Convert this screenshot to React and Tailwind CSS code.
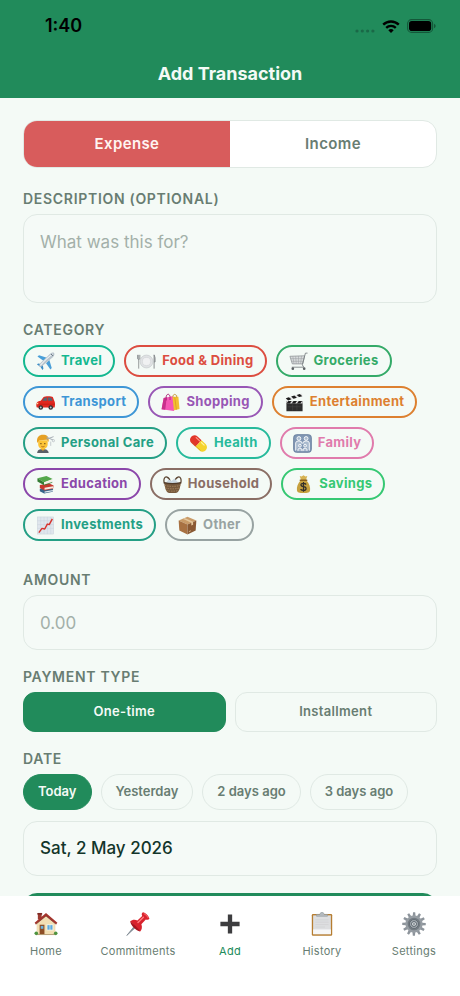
import React, { useState } from 'react';

const PlaneIcon = () => (
    <>
        <path d="M1.5 4.800 3.200 3.400l8.300 2.600-3.300 3.400z" fill="#4a9fd8" />
        <path d="M15.200 18.500l1.400-1.700-2.600-8.300-3.400 3.300z" fill="#4a9fd8" />
        <path d="M1 13.200l1.200-1 4.300.6.6.6.7 4.300-1 1.200-2.200-3.500z" fill="#3c8dc6" />
        <path d="M19 1c-1-1-3.200-.2-4.700 1.300L4.700 11.600c-.9 1-1.700 2.500-1.200 3.900 1.300.4 2.800-.4 3.800-1.300l10.400-8.700c1.400-1.300 2.300-3.500 1.300-4.500z" fill="#b9c4cc" />
        <path d="M17.700 2C13 5.200 8 10.200 4.500 14.100" stroke="#eef3f6" strokeWidth="1.100" fill="none" />
        <path d="M16 2.200l1.800 1.800" stroke="#4b5c68" strokeWidth="1" />
    </>
);

const PlateIcon = () => (
    <>
        <circle cx="10" cy="10" r="6.800" fill="#e0e2e4" stroke="#c0c4c7" strokeWidth=".6" />
        <circle cx="10" cy="10" r="4.300" fill="#f0f1f2" stroke="#cfd2d4" strokeWidth=".6" />
        <path d="M.6 3v4.200q1.200 1.500 2.400 0V3M1.800 3v14.500" stroke="#85898c" strokeWidth=".9" fill="none" />
        <path d="M18 17.500V3q1.400 2 1 7.500h-1" stroke="#85898c" strokeWidth="1" fill="#b5b9bc" />
    </>
);

const CartIcon = () => (
    <>
        <path d="M1 4.500l15.500-.5-2 8.500H3.500z" fill="#d9dcdd" stroke="#8c9194" strokeWidth=".8" />
        <path d="M4 4.500l1.200 7.800M7 4.400l.6 8M10 4.200l-.1 8.200M13.200 4.100l-1 8.400M1.600 7h14M2.500 9.800h12.600" stroke="#9ba0a3" strokeWidth=".6" />
        <path d="M19.500 1.200h-2.200L14 13.500l1.500 2.500H3" stroke="#777c80" strokeWidth=".9" fill="none" />
        <circle cx="4" cy="17.500" r="1.400" fill="#5c6164" />
        <circle cx="16" cy="17.500" r="1.400" fill="#5c6164" />
    </>
);

const CarIcon = () => (
    <>
        <path d="M.6 10.800c.4-1.700 2.400-2.300 4.400-2.700l3-3.900c1-1.100 8.300-1.300 9.700 0l1.600 4.300c.9 1.100.9 4.500.3 6.700H.9c-.7-1.100-.7-3-.3-4.400z" fill="#e0281f" />
        <path d="M6.500 8.100l2.200-2.900c.8-.4 1.800-.5 2.800-.5v3.400zM12.500 4.700c1.500 0 3 .1 3.900.5l1.100 2.900h-5z" fill="#59636f" />
        <path d="M.8 11.800h18.700" stroke="#b5160f" strokeWidth=".6" />
        <circle cx="5" cy="15.200" r="2.400" fill="#2e3033" />
        <circle cx="5" cy="15.200" r="1" fill="#bfc3c6" />
        <circle cx="15.500" cy="15.200" r="2.400" fill="#2e3033" />
        <circle cx="15.500" cy="15.200" r="1" fill="#bfc3c6" />
        <path d="M.7 10.700l1.700-.6v1.700H.6z" fill="#ffd9a0" />
    </>
);

const BagsIcon = () => (
    <>
        <path d="M11 4h7.300l1.200 12.800-6.500 1.700z" fill="#f3c033" />
        <path d="M12.500 4.500V2.700q2-2.700 4 0v1.800" stroke="#b98416" strokeWidth=".8" fill="none" />
        <path d="M14.500 4.500l1.700 13" stroke="#d99b1d" strokeWidth=".8" />
        <path d="M2.800 5.200l9.200-1.700 1.700 15.500L.6 17.200z" fill="#f557b5" />
        <path d="M2.800 5.200L.6 17.200l3.900.5L6 4.600z" fill="#c8308c" />
        <path d="M5.500 7.800V3.200q2-4 4 0v4.200" stroke="#a72673" strokeWidth=".9" fill="none" />
    </>
);

const ClapperIcon = () => (
    <>
        <path d="M1.500 8.500h17v10.700h-17z" fill="#2d2d2d" />
        <path d="M1.500 8.500h17v2.500h-17z" fill="#e4e4e4" />
        <path d="M1.500 11l2-2.500h3.600l-2 2.500zM7 11l2-2.500h3.600l-2 2.500zM12.500 11l2-2.500h3.600l-2 2.500z" fill="#1d1d1d" />
        <path d="M.8 5.400L17.700.4l.8 2.900L1.700 8.200z" fill="#e4e4e4" />
        <path d="M.8 5.400l3.300-1 2.700 2.300-3.500 1.100zM6.500 3.700l3.400-1 2.600 2.300-3.500 1zM12.300 2l3.300-1 2.600 2.300-3.400 1z" fill="#1d1d1d" />
        <path d="M3 14.500h14M8 12v6.500M12.500 12v6.500" stroke="#4a4a4a" strokeWidth=".5" />
    </>
);

const HaircutIcon = () => (
    <>
        <path d="M1.200 20c.3-3.500 2.800-4.300 6-4.300s5.700 1 6.200 4.300z" fill="#5b6068" />
        <path d="M5.300 13h4v3.300l-2 1.200-2-1.200z" fill="#eaa92b" />
        <path d="M2.300 6.500h10v4.300c0 3-2.200 5-5 5s-5-2-5-5z" fill="#fcc436" />
        <path d="M1.300 9.500C.1 3.300 3.500.9 7.300.9s7 1.900 5.900 7.600L11.500 6l-8 .5z" fill="#e6a123" />
        <path d="M5.200 9.600v1.100M9.300 9.600v1.100" stroke="#5c3b12" strokeWidth="1.100" />
        <path d="M5.600 13q1.700 1.300 3.400 0" stroke="#a35c16" strokeWidth=".8" fill="none" />
        <path d="M11 3.300l7 3M11 5.500l7.500-2.700" stroke="#a3abb2" strokeWidth="1" />
        <circle cx="18.300" cy="7" r="1.200" fill="none" stroke="#b7bdc3" strokeWidth=".8" />
        <path d="M15.500 8v4.500" stroke="#c5cacd" strokeWidth="1" />
    </>
);

const PillIcon = () => (
    <g transform="rotate(43 10 10)">
        <path d="M10 5.300H4.200a4.700 4.700 0 0 0 0 9.400H10z" fill="#e23629" />
        <path d="M10 5.300h5.800a4.700 4.700 0 0 1 0 9.400H10z" fill="#f5d32c" />
        <path d="M4 7.200h5" stroke="#ff9b86" strokeWidth="1.200" strokeLinecap="round" />
        <path d="M11.500 7.200h4" stroke="#fff4a0" strokeWidth="1.200" strokeLinecap="round" />
        <path d="M3.500 13.900h13" stroke="#b67919" strokeWidth=".7" opacity=".5" />
    </g>
);

const FamilyIcon = () => (
    <>
        <rect x=".7" y=".7" width="18.600" height="18.600" rx="3" fill="#8298b5" stroke="#62799a" strokeWidth=".9" />
        <g fill="#a9bace" stroke="#fff" strokeWidth=".9">
            <circle cx="6.200" cy="4.700" r="2" />
            <circle cx="13.800" cy="4.700" r="2" />
            <path d="M2.800 17.500V9.500q0-2.200 3.400-2.200T9.700 10M17.200 17.500V9.500q0-2.200-3.400-2.200T10.300 10" />
            <circle cx="7.300" cy="12.300" r="1.500" />
            <circle cx="12.700" cy="12.300" r="1.500" />
            <path d="M5.200 18v-2.200q2.100-1.900 4.200 0V18M10.600 18v-2.200q2.100-1.900 4.200 0V18" />
        </g>
    </>
);

const BooksIcon = () => (
    <>
        <path d="M4 14.500l10-1.500 4 2-.4 2.700-9 1.800L4 17z" fill="#35658a" />
        <path d="M4 10.500L14 9l4.500 2-.5 3.500-9 1.700-5-2.500z" fill="#c8372e" />
        <path d="M9 13.500l9-1.600v2l-9 1.700z" fill="#f4e9df" />
        <path d="M9 17.300l8.800-1.600v1.500L9 18.800z" fill="#e1e8ec" />
        <path d="M1.500 3.500L11 1l6.500 3.300L8.500 7.500z" fill="#54a84b" />
        <path d="M1.500 3.500l7 4v3.300l-7-4z" fill="#347c34" />
        <path d="M8.500 7.800l8.500-3v2.500l-8.500 3z" fill="#f4f0e6" />
        <path d="M8.500 10.700l8.700-3" stroke="#347c34" strokeWidth=".8" />
    </>
);

const BasketIcon = () => (
    <>
        <path d="M1.500 9C0 4.500 2 1.200 4.200 2.200c2.100.9 3.500 3.800 3 6.600M18.500 9c1.500-4.500-.5-7.800-2.700-6.800-2.100.9-3.500 3.800-3 6.600" stroke="#5a4431" strokeWidth="1.300" fill="none" />
        <path d="M3 8.500l3-3.700 3 1.500L12 3.800l4.500 4.700z" fill="#c9d6df" />
        <path d="M1 8q9 2.200 18 0l-1.500 6.500q-1.300 4.500-4.500 4.500H7q-3.200 0-4.500-4.500z" fill="#76593d" />
        <path d="M1.700 11q8.300 2 16.600 0M2.300 13.600q7.700 2 15.400 0M3.300 16.200q6.700 1.700 13.400 0" stroke="#ad8b63" strokeWidth=".9" strokeDasharray="1.600 1" fill="none" />
        <path d="M1 8q9 2.200 18 0" stroke="#4f3a29" strokeWidth="1.400" fill="none" />
    </>
);

const MoneyBagIcon = () => (
    <>
        <path d="M7 5.500h6c3 3.500 4.300 7 3.900 10.500-.3 2.500-2.400 3-6.900 3s-6.600-.5-6.900-3c-.4-3.500.9-7 3.900-10.500z" fill="#c6a03e" />
        <path d="M6 1l2 .5L10 .3l2 1.200 2-.5-1.500 4.500h-5z" fill="#d6b251" />
        <path d="M6.600 5.600h6.800" stroke="#8a5f1b" strokeWidth="1.500" strokeLinecap="round" />
        <path d="M12.800 10q-1-1.300-2.800-1.300c-3.700 0-3.500 3.200 0 3.600 3.700.4 3.500 4 0 4q-2.200 0-3.100-1.400M10 7.400v10.200" stroke="#33302a" strokeWidth="1.300" fill="none" />
    </>
);

const ChartIcon = () => (
    <>
        <rect x="1.500" y="1" width="17" height="18" fill="#e0e6ed" stroke="#ccd4dc" strokeWidth=".6" />
        <path d="M5 1v18M8.500 1v18M12 1v18M15.500 1v18M1.500 5h17M1.500 9h17M1.500 13h17" stroke="#c8d3de" strokeWidth=".5" />
        <path d="M3 17.500l3.300-4.500 2.900.7 2.700-5.200 2 .5L17.200 3" stroke="#d7332d" strokeWidth="1.500" fill="none" strokeLinejoin="round" />
    </>
);

const BoxIcon = () => (
    <>
        <path d="M.7 4.800L10 .8l9.300 4-9.300 4.200z" fill="#c99b68" />
        <path d="M.7 4.800L10 9v10.600l-8.600-4.400z" fill="#a87142" />
        <path d="M19.300 4.800L10 9v10.600l8.600-4.400z" fill="#8a5933" />
        <path d="M5 3l9 4v3l1.900-.9V6.100L7 2.100z" fill="#e3c69b" />
        <path d="M11.500 16.500l2-1" stroke="#e3c69b" strokeWidth=".8" />
    </>
);

const HomeIcon = () => (
    <>
        <path d="M3.200 1.200h3.200v5H3.200z" fill="#9c3a30" />
        <path d="M2.800.8h4v1.400h-4z" fill="#7d2a24" />
        <path d="M2.200 9L10 2.500 17.800 9v9.800H2.200z" fill="#f2dfb4" />
        <path d="M10 .8L19.500 9l-1 1.300-8.500-7-8.500 7L.5 9z" fill="#a4352d" />
        <path d="M10 3.300l8.500 7M10 3.300l-8.500 7" stroke="#6f211d" strokeWidth=".5" />
        <rect x="4.700" y="10.600" width="4" height="8.200" fill="#8d4e26" />
        <rect x="5.600" y="11.600" width="2.200" height="2.400" fill="#6ab2dc" />
        <rect x="10.800" y="10.600" width="5" height="4.500" fill="#5aaae0" stroke="#fff8e2" strokeWidth=".7" />
        <path d="M13.300 10.600v4.500" stroke="#fff8e2" strokeWidth=".5" />
        <path d="M1.800 18.800h16.400" stroke="#b39b73" strokeWidth=".8" />
        <circle cx="1.900" cy="17.800" r="1.500" fill="#4f9440" />
        <circle cx="18.100" cy="17.800" r="1.500" fill="#4f9440" />
    </>
);

const PinIcon = () => (
    <>
        <path d="M8.500 12.300L.6 19.600l6.800-8.300z" fill="#85919a" stroke="#77838c" strokeWidth=".6" />
        <path d="M3.500 7.800c1.500-1.500 4-1.700 6-.8l4-3.700c-.7-1.200-.4-2.400.6-3 2.200.5 4.800 2.900 5.400 5.300-.6 1-1.900 1.200-3 .6l-3.700 4c.9 2.200.5 4.600-1 6z" fill="#d8222d" />
        <path d="M3.500 7.800c1 .7 7.800 6.700 8.300 8.400-3.500-.5-7.800-4.500-8.300-8.400z" fill="#a8131e" />
        <path d="M10 8.700l4.500-4.300" stroke="#ff7b7e" strokeWidth="1.200" strokeLinecap="round" />
        <path d="M14.800 1.200q2.800 1.300 3.800 3.800" stroke="#f65c60" strokeWidth=".9" fill="none" />
    </>
);

const PlusIcon = () => <path d="M8.200 2h3.600v6.200H18v3.600h-6.200V18H8.200v-6.200H2V8.200h6.200z" fill="#3d3d3f" />;

const ClipboardIcon = () => (
    <>
        <rect x="1.500" y="1.700" width="17" height="18" rx="1" fill="#b67d31" />
        <path d="M2.600 2.800h14.800v15.700H2.600z" fill="#dddee0" />
        <path d="M2.600 14.500h14.800v4H2.600z" fill="#f7f7f8" />
        <path d="M4.500 6.500h11M4.500 8.500h11M4.500 10.500h11M4.500 12.500h8" stroke="#cfd1d3" strokeWidth=".6" />
        <path d="M5.500 3.600V2h2.700Q8.500.3 10 .3T11.800 2h2.700v1.600z" fill="#b4babf" stroke="#929a9f" strokeWidth=".5" />
    </>
);

const teeth = [0, 30, 60, 90, 120, 150, 180, 210, 240, 270, 300, 330];

const GearIcon = () => (
    <>
        {teeth.map((angle) => (
            <path key={angle} d="M8.900 3.700L9.200.2h1.800l.3 3.500z" fill="#8d949b" transform={`rotate(${angle} 10 10)`} />
        ))}
        <circle cx="10" cy="10" r="7.200" fill="#969da3" />
        <circle cx="10" cy="10" r="5.300" fill="#737b82" />
        <circle cx="10" cy="10" r="3.700" fill="#a3aab0" stroke="#59636b" strokeWidth=".7" />
        <circle cx="10" cy="10" r="2" fill="#f1f4f6" stroke="#4d5860" strokeWidth=".8" />
        <path d="M10 9v2" stroke="#4d5860" strokeWidth=".9" />
    </>
);

const Icon = ({ art: Art, className }) => (
    <svg viewBox="0 0 20 20" className={className} aria-hidden="true">
        <Art />
    </svg>
);

const categories = [
    { name: 'Travel', icon: PlaneIcon, color: 'border-[#14b890] text-[#14b890]' },
    { name: 'Food & Dining', icon: PlateIcon, color: 'border-[#dc4d40] text-[#dc4d40]' },
    { name: 'Groceries', icon: CartIcon, color: 'border-[#34aa68] text-[#34aa68]' },
    { name: 'Transport', icon: CarIcon, color: 'border-[#3d96d6] text-[#3d96d6]' },
    { name: 'Shopping', icon: BagsIcon, color: 'border-[#9857b5] text-[#9857b5]' },
    { name: 'Entertainment', icon: ClapperIcon, color: 'border-[#dd8030] text-[#dd8030]' },
    { name: 'Personal Care', icon: HaircutIcon, color: 'border-[#249f85] text-[#249f85]' },
    { name: 'Health', icon: PillIcon, color: 'border-[#27ba9c] text-[#27ba9c]' },
    { name: 'Family', icon: FamilyIcon, color: 'border-[#e07bac] text-[#e07bac]' },
    { name: 'Education', icon: BooksIcon, color: 'border-[#8b47aa] text-[#8b47aa]' },
    { name: 'Household', icon: BasketIcon, color: 'border-[#8a6e65] text-[#8a6e65]' },
    { name: 'Savings', icon: MoneyBagIcon, color: 'border-[#36c873] text-[#36c873]' },
    { name: 'Investments', icon: ChartIcon, color: 'border-[#249f85] text-[#249f85]' },
    { name: 'Other', icon: BoxIcon, color: 'border-[#98a3a2] text-[#98a3a2]' },
];

const tabs = [
    { name: 'Home', icon: HomeIcon },
    { name: 'Commitments', icon: PinIcon },
    { name: 'Add', icon: PlusIcon },
    { name: 'History', icon: ClipboardIcon },
    { name: 'Settings', icon: GearIcon },
];

const days = ['Today', 'Yesterday', '2 days ago', '3 days ago'];

const labelClass = 'block mb-[5px] text-sm leading-5 font-semibold tracking-wider uppercase text-[#687d72]';
const fieldClass = 'block w-full px-4 rounded-[14px] border border-[#e0e9e4] bg-[#f5faf7] text-[17px] text-[#12352a] placeholder:text-[#a3b0a9] focus:outline-none focus:border-[#218b5b]';

const StatusBar = () => (
    <div className="flex h-[52px] items-center justify-between pl-[45px] pr-6 text-black">
        <span className="text-lg font-semibold">1:40</span>
        <div className="flex items-center gap-[7px]">
            <svg viewBox="0 0 20 13" className="h-[13px] w-5" aria-hidden="true">
                <g fill="#1a6847">
                    <circle cx="2" cy="11" r="1.600" />
                    <circle cx="7.300" cy="11" r="1.600" />
                    <circle cx="12.600" cy="11" r="1.600" />
                    <circle cx="17.900" cy="11" r="1.600" />
                </g>
            </svg>
            <svg viewBox="0 0 18 13" className="h-[13px] w-[18px]" fill="none" aria-hidden="true">
                <path d="M1.200 4.700a11.200 11.200 0 0 1 15.600 0" stroke="#000" strokeWidth="2.400" />
                <path d="M4.200 7.900a6.900 6.900 0 0 1 9.600 0" stroke="#000" strokeWidth="2.300" />
                <path d="M9 13L6.300 10.200a3.900 3.900 0 0 1 5.400 0z" fill="#000" />
            </svg>
            <svg viewBox="0 0 29 14" className="h-[14px] w-[29px]" aria-hidden="true">
                <rect x=".6" y=".6" width="25" height="12.800" rx="4" fill="none" stroke="#145739" strokeWidth="1.100" />
                <rect x="2" y="2" width="22.200" height="10" rx="2.800" fill="#000" />
                <path d="M27 4.800q1.700.7 1.700 2.200T27 9.200z" fill="#145739" />
            </svg>
        </div>
    </div>
);

const App = () => {
    const [type, setType] = useState('Expense');
    const [category, setCategory] = useState(null);
    const [payment, setPayment] = useState('One-time');
    const [day, setDay] = useState('Today');

    return (
        <div className="flex h-screen flex-col bg-[#f4faf6] font-['Inter','Liberation_Sans',sans-serif]">
            {/* Header */}
            <header className="shrink-0 bg-[#218b5b] pb-0.5">
                <StatusBar />
                <h1 className="flex h-11 items-center justify-center text-lg font-bold text-[#f4faf6]">Add Transaction</h1>
            </header>

            <main className="min-h-0 flex-1 overflow-y-auto px-[23px] pt-[22px] [scrollbar-width:none]">
                {/* Type */}
                <div className="mb-[21px] flex h-12 overflow-hidden rounded-[14px] border border-[#e0e9e4] bg-white">
                    {['Expense', 'Income'].map((item) => (
                        <button
                            key={item}
                            type="button"
                            aria-pressed={type === item}
                            onClick={() => setType(item)}
                            className={`flex-1 text-[15px] font-semibold tracking-wide ${type === item ? 'bg-[#d85c5c] text-[#fff4f2]' : 'text-[#687d72]'}`}
                        >
                            {item}
                        </button>
                    ))}
                </div>

                {/* Description */}
                <div className="mb-[17px]">
                    <label htmlFor="description" className={labelClass}>Description (optional)</label>
                    <textarea id="description" placeholder="What was this for?" className={`${fieldClass} h-[89px] resize-none py-[15px] leading-6`} />
                </div>

                {/* Category */}
                <div className="mb-[29px]">
                    <h2 className={labelClass}>Category</h2>
                    <div className="flex flex-wrap gap-[9px]">
                        {categories.map((item) => (
                            <button
                                key={item.name}
                                type="button"
                                aria-pressed={category === item.name}
                                onClick={() => setCategory(item.name)}
                                className={`flex h-8 items-center gap-1.5 rounded-full border-2 px-[11px] text-[13px] font-bold tracking-wide ${item.color}`}
                            >
                                <Icon art={item.icon} className="size-[19px]" />
                                {item.name}
                            </button>
                        ))}
                    </div>
                </div>

                {/* Amount */}
                <div className="mb-[17px]">
                    <label htmlFor="amount" className={labelClass}>Amount</label>
                    <input id="amount" type="text" inputMode="decimal" placeholder="0.00" className={`${fieldClass} h-[55px]`} />
                </div>

                {/* Payment type */}
                <div className="mb-[17px]">
                    <h2 className={labelClass}>Payment type</h2>
                    <div className="flex gap-[9px]">
                        {['One-time', 'Installment'].map((item) => (
                            <button
                                key={item}
                                type="button"
                                aria-pressed={payment === item}
                                onClick={() => setPayment(item)}
                                className={`h-10 flex-1 rounded-xl border text-[13px] font-semibold tracking-wide ${payment === item ? 'border-[#218b5b] bg-[#218b5b] text-[#f4faf6]' : 'border-[#e0e9e4] text-[#687d72]'}`}
                            >
                                {item}
                            </button>
                        ))}
                    </div>
                </div>

                {/* Date */}
                <div className="mb-[17px]">
                    <h2 className={labelClass}>Date</h2>
                    <div className="mb-[11px] flex gap-[9px]">
                        {days.map((item) => (
                            <button
                                key={item}
                                type="button"
                                aria-pressed={day === item}
                                onClick={() => setDay(item)}
                                className={`h-9 rounded-full border px-3.5 text-[13px] font-semibold ${day === item ? 'border-[#218b5b] bg-[#218b5b] text-[#f4faf6]' : 'border-[#e0e9e4] text-[#687d72]'}`}
                            >
                                {item}
                            </button>
                        ))}
                    </div>
                    <button type="button" className={`${fieldClass} h-[55px] text-left font-medium`}>Sat, 2 May 2026</button>
                </div>

                <button type="submit" aria-label="Save" className="mb-6 block h-14 w-full rounded-[14px] bg-[#218b5b]" />
            </main>

            {/* Tab bar */}
            <nav className="flex h-[100px] shrink-0 bg-white pt-4">
                {tabs.map((tab) => (
                    <a
                        key={tab.name}
                        href={`#${tab.name.toLowerCase()}`}
                        className={`flex flex-1 flex-col items-center gap-[7px] text-[11px] leading-4 tracking-wide ${tab.name === 'Add' ? 'text-[#218b5b]' : 'text-[#687d72]'}`}
                    >
                        <Icon art={tab.icon} className="size-6" />
                        {tab.name}
                    </a>
                ))}
            </nav>
        </div>
    );
};

export default App;
